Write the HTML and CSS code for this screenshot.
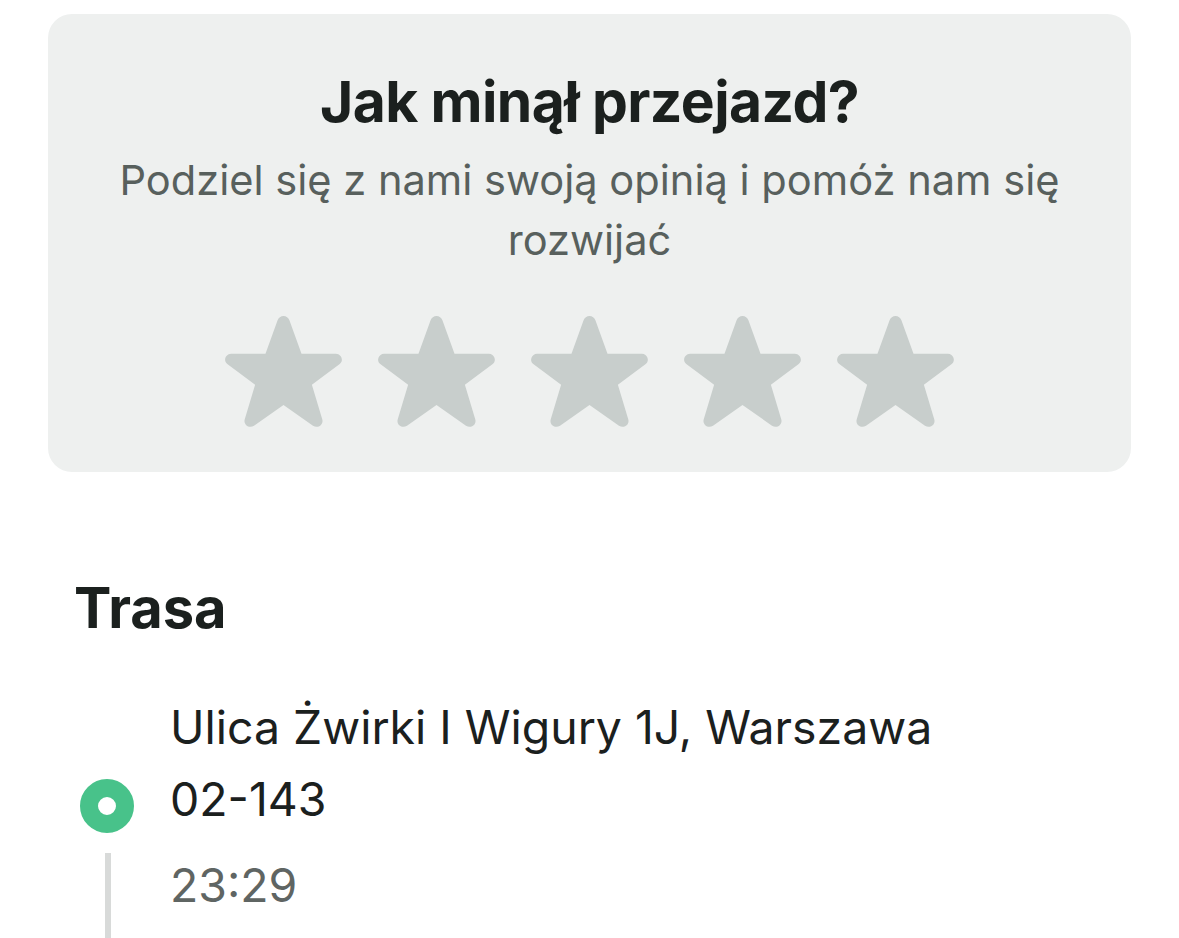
FILE: index.html
```html
<!DOCTYPE html>
<html lang="pl">
<head>
<meta charset="utf-8">
<link rel="stylesheet" href="styles.css">
</head>
<body>
<div class="page">
  <section class="card">
    <h1 class="title">Jak minął przejazd?</h1>
    <p class="subtitle">Podziel się z nami swoją opinią i pomóż nam się rozwijać</p>
    <div class="stars">
      <svg class="star" viewBox="0 0 24 24"><path d="M12 2.2c.5 0 .9.3 1.1.8l2.2 6.1h6.3c1 0 1.5 1.3.7 1.9l-5.1 3.8 1.9 6.3c.3 1-.8 1.8-1.7 1.2L12 18.5l-5.4 3.8c-.9.6-2-.2-1.7-1.2l1.9-6.3-5.1-3.8c-.8-.6-.3-1.9.7-1.9h6.3L10.9 3c.2-.5.6-.8 1.1-.8z"/></svg>
      <svg class="star" viewBox="0 0 24 24"><path d="M12 2.2c.5 0 .9.3 1.1.8l2.2 6.1h6.3c1 0 1.5 1.3.7 1.9l-5.1 3.8 1.9 6.3c.3 1-.8 1.8-1.7 1.2L12 18.5l-5.4 3.8c-.9.6-2-.2-1.7-1.2l1.9-6.3-5.1-3.8c-.8-.6-.3-1.9.7-1.9h6.3L10.9 3c.2-.5.6-.8 1.1-.8z"/></svg>
      <svg class="star" viewBox="0 0 24 24"><path d="M12 2.2c.5 0 .9.3 1.1.8l2.2 6.1h6.3c1 0 1.5 1.3.7 1.9l-5.1 3.8 1.9 6.3c.3 1-.8 1.8-1.7 1.2L12 18.5l-5.4 3.8c-.9.6-2-.2-1.7-1.2l1.9-6.3-5.1-3.8c-.8-.6-.3-1.9.7-1.9h6.3L10.9 3c.2-.5.6-.8 1.1-.8z"/></svg>
      <svg class="star" viewBox="0 0 24 24"><path d="M12 2.2c.5 0 .9.3 1.1.8l2.2 6.1h6.3c1 0 1.5 1.3.7 1.9l-5.1 3.8 1.9 6.3c.3 1-.8 1.8-1.7 1.2L12 18.5l-5.4 3.8c-.9.6-2-.2-1.7-1.2l1.9-6.3-5.1-3.8c-.8-.6-.3-1.9.7-1.9h6.3L10.9 3c.2-.5.6-.8 1.1-.8z"/></svg>
      <svg class="star" viewBox="0 0 24 24"><path d="M12 2.2c.5 0 .9.3 1.1.8l2.2 6.1h6.3c1 0 1.5 1.3.7 1.9l-5.1 3.8 1.9 6.3c.3 1-.8 1.8-1.7 1.2L12 18.5l-5.4 3.8c-.9.6-2-.2-1.7-1.2l1.9-6.3-5.1-3.8c-.8-.6-.3-1.9.7-1.9h6.3L10.9 3c.2-.5.6-.8 1.1-.8z"/></svg>
    </div>
  </section>

  <section class="route">
    <h2 class="route-title">Trasa</h2>
    <div class="stop">
      <div class="marker">
        <div class="dot"></div>
        <div class="line"></div>
      </div>
      <div class="stop-text">
        <div class="address">Ulica Żwirki I Wigury 1J, Warszawa <span class="nowrap">02-143</span></div>
        <div class="time">23:29</div>
      </div>
    </div>
  </section>
</div>
</body>
</html>
```

FILE: styles.css
```css
* { box-sizing: border-box; }
html, body { margin: 0; padding: 0; background: #ffffff; }
body {
  font-family: Inter, "Noto Sans", "Liberation Sans", sans-serif;
  color: #1b201e;
  width: 1179px;
  height: 938px;
  overflow: hidden;
}
.page { padding: 14px 48px 0 48px; }
.card {
  background: #eef0ef;
  border-radius: 24px;
  height: 458px;
  padding: 54px 40px 0 40px;
  display: flex;
  flex-direction: column;
  align-items: center;
}
.title {
  margin: 0;
  font-size: 57px;
  font-weight: 700;
  line-height: 68px;
  letter-spacing: -0.6px;
  color: #1b201e;
}
.subtitle {
  margin: 14px 0 0 0;
  font-size: 41.6px;
  line-height: 60px;
  color: #58605d;
  text-align: center;
  max-width: 1000px;
}
.stars {
  display: flex;
  gap: 22px;
  margin-top: 34px;
}
.star {
  width: 131px;
  height: 131px;
  fill: #c8cecc;
}
.route { padding: 104px 0 0 26px; }
.route-title {
  margin: 0;
  font-size: 56px;
  font-weight: 700;
  line-height: 64px;
  color: #1b201e;
}
.stop {
  display: flex;
  margin-top: 51px;
}
.marker {
  width: 96px;
  flex: none;
  display: flex;
  flex-direction: column;
  align-items: flex-start;
  padding-top: 88px;
}
.dot {
  width: 54px;
  height: 54px;
  border-radius: 50%;
  border: 18px solid #48c28a;
  background: #ffffff;
  margin-left: 6px;
}
.line {
  width: 6px;
  height: 120px;
  background: #d8dad9;
  margin-left: 31px;
  margin-top: 20px;
}
.stop-text { width: 820px; }
.address {
  font-size: 46.4px;
  line-height: 72px;
  color: #1b201e;
}
.nowrap { white-space: nowrap; }
.time {
  margin-top: 25px;
  font-size: 46.4px;
  line-height: 50px;
  color: #5f6563;
}
```
